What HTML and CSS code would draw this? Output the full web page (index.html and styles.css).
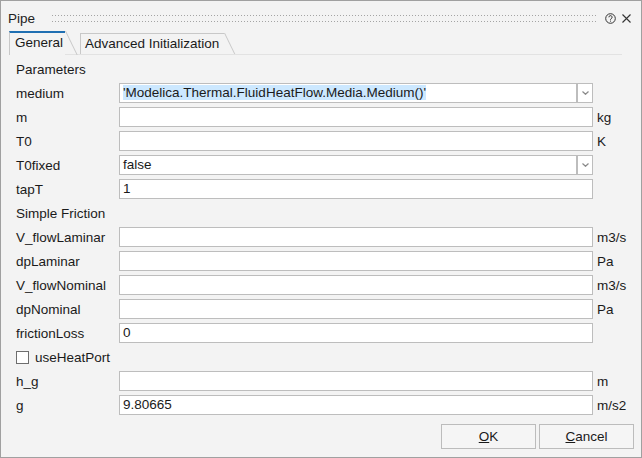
FILE: index.html
```html
<!DOCTYPE html>
<html lang="en">
<head>
    <meta charset="UTF-8">
    <title>Pipe</title>
    <link rel="stylesheet" href="styles.css">
</head>
<body>
    <div class="window">

        <div class="titlebar">
            <span class="title">Pipe</span>
            <div class="grip"></div>
            <svg class="help" viewBox="0 0 11 11">
                <circle cx="5.5" cy="5.5" r="4.8" fill="none" stroke="#333" stroke-width="1"/>
                <path d="M3.9 4.3a1.6 1.6 0 1 1 2.3 1.4c-.5.3-.7.5-.7 1.1" fill="none" stroke="#333" stroke-width="1"/>
                <rect x="5" y="7.6" width="1" height="1" fill="#333"/>
            </svg>
            <svg class="close" viewBox="0 0 9 9">
                <path d="M0.5 0.5L8.5 8.5M8.5 0.5L0.5 8.5" stroke="#333" stroke-width="1.1"/>
            </svg>
        </div>

        <div class="tabs">
            <div class="tab active">General</div>
            <div class="tab">Advanced Initialization</div>
        </div>

        <div class="form">
            <div class="group">Parameters</div>

            <div class="label">medium</div>
            <div class="combo">
                <div class="field"><span class="sel">'Modelica.Thermal.FluidHeatFlow.Media.Medium()'</span></div>
                <div class="drop"><svg viewBox="0 0 7 4"><path d="M0.5 0.5L3.5 3.3L6.5 0.5" fill="none" stroke="#8a8a8a" stroke-width="1.2"/></svg></div>
            </div>
            <div class="unit"></div>

            <div class="label">m</div>
            <div class="field"></div>
            <div class="unit">kg</div>

            <div class="label">T0</div>
            <div class="field"></div>
            <div class="unit">K</div>

            <div class="label">T0fixed</div>
            <div class="combo">
                <div class="field">false</div>
                <div class="drop"><svg viewBox="0 0 7 4"><path d="M0.5 0.5L3.5 3.3L6.5 0.5" fill="none" stroke="#8a8a8a" stroke-width="1.2"/></svg></div>
            </div>
            <div class="unit"></div>

            <div class="label">tapT</div>
            <div class="field">1</div>
            <div class="unit"></div>

            <div class="group">Simple Friction</div>

            <div class="label">V_flowLaminar</div>
            <div class="field"></div>
            <div class="unit">m3/s</div>

            <div class="label">dpLaminar</div>
            <div class="field"></div>
            <div class="unit">Pa</div>

            <div class="label">V_flowNominal</div>
            <div class="field"></div>
            <div class="unit">m3/s</div>

            <div class="label">dpNominal</div>
            <div class="field"></div>
            <div class="unit">Pa</div>

            <div class="label">frictionLoss</div>
            <div class="field">0</div>
            <div class="unit"></div>

            <div class="check"><span class="box"></span>useHeatPort</div>

            <div class="label">h_g</div>
            <div class="field"></div>
            <div class="unit">m</div>

            <div class="label">g</div>
            <div class="field">9.80665</div>
            <div class="unit">m/s2</div>
        </div>

        <div class="buttons">
            <button class="btn"><u>O</u>K</button>
            <button class="btn"><u>C</u>ancel</button>
        </div>

    </div>
</body>
</html>
```

FILE: styles.css
```css
*{
    margin: 0;
    padding: 0;
    box-sizing: border-box;
}
body{
    font-family: "Liberation Sans", Arial, sans-serif;
    font-size: 13.5px;
    color: #1a1a1a;
    background: #f3f3f3;
}
.window{
    width: 642px;
    height: 458px;
    border: 1px solid #a0a0a0;
    background: #f3f3f3;
    display: flex;
    flex-direction: column;
}

/* title bar */
.titlebar{
    display: flex;
    align-items: center;
    height: 29px;
    padding: 6px 10px 0 7px;
}
.title{
    line-height: 16px;
    color: #222;
}
.grip{
    flex: 1;
    height: 7px;
    margin: 0 9px 0 17px;
    background:
        linear-gradient(90deg, #a4a4a4 1px, transparent 1px) 0 0 / 3px 1px repeat-x,
        linear-gradient(90deg, #a4a4a4 1px, transparent 1px) 0 6px / 3px 1px repeat-x;
}
.help{
    width: 11px;
    height: 11px;
    margin-right: 6px;
}
.close{
    width: 9px;
    height: 9px;
}

/* tabs */
.tabs{
    display: flex;
    align-items: flex-end;
    height: 24px;
    margin: 1px 19px 0 8px;
    border-bottom: 1px solid #e2e2e2;
}
.tab{
    position: relative;
    height: 21px;
    line-height: 20px;
    padding: 0 5px 0 4px;
    margin-right: 14px;
    border-top: 1px solid #c8c8c8;
    border-left: 1px solid #c8c8c8;
}
.tab::after{
    content: "";
    position: absolute;
    left: 100%;
    top: -1px;
    bottom: 0;
    border-left: 1px solid #c8c8c8;
    transform: skewX(26deg);
    transform-origin: top left;
}
.tab.active{
    height: 24px;
    padding: 0 2px 0 5px;
    margin-right: 15px;
    margin-bottom: -1px;
    background: #f3f3f3;
    border-top: 2px solid #1f6fb2;
}
.tab.active::after{
    top: -2px;
}

/* form */
.form{
    display: grid;
    grid-template-columns: 103px 474px auto;
    grid-auto-rows: 20px;
    row-gap: 4px;
    align-items: center;
    padding: 4px 0 0 15px;
}
.group{
    grid-column: 1 / -1;
}
.field{
    height: 20px;
    line-height: 18px;
    padding: 0 3px;
    border: 1px solid #bdbdbd;
    background: #fff;
    white-space: nowrap;
    overflow: hidden;
}
.sel{
    background: #cce8ff;
}
.combo{
    display: flex;
    height: 20px;
}
.combo .field{
    flex: 1;
}
.drop{
    width: 16px;
    border: 1px solid #bdbdbd;
    background: #fff;
    display: flex;
    align-items: center;
    justify-content: center;
}
.drop svg{
    width: 7px;
    height: 4px;
}
.unit{
    padding-left: 4px;
}
.check{
    grid-column: 1 / -1;
    display: flex;
    align-items: center;
}
.check .box{
    width: 13px;
    height: 13px;
    border: 1px solid #6e6e6e;
    background: #fff;
    margin-right: 6px;
}

/* buttons */
.buttons{
    margin-top: auto;
    display: flex;
    justify-content: flex-end;
    gap: 3px;
    padding: 0 7px 8px 0;
}
.btn{
    width: 95px;
    height: 25px;
    font: inherit;
    color: #1a1a1a;
    background: #f5f5f5;
    border: 1px solid #bcbcbc;
}
```
